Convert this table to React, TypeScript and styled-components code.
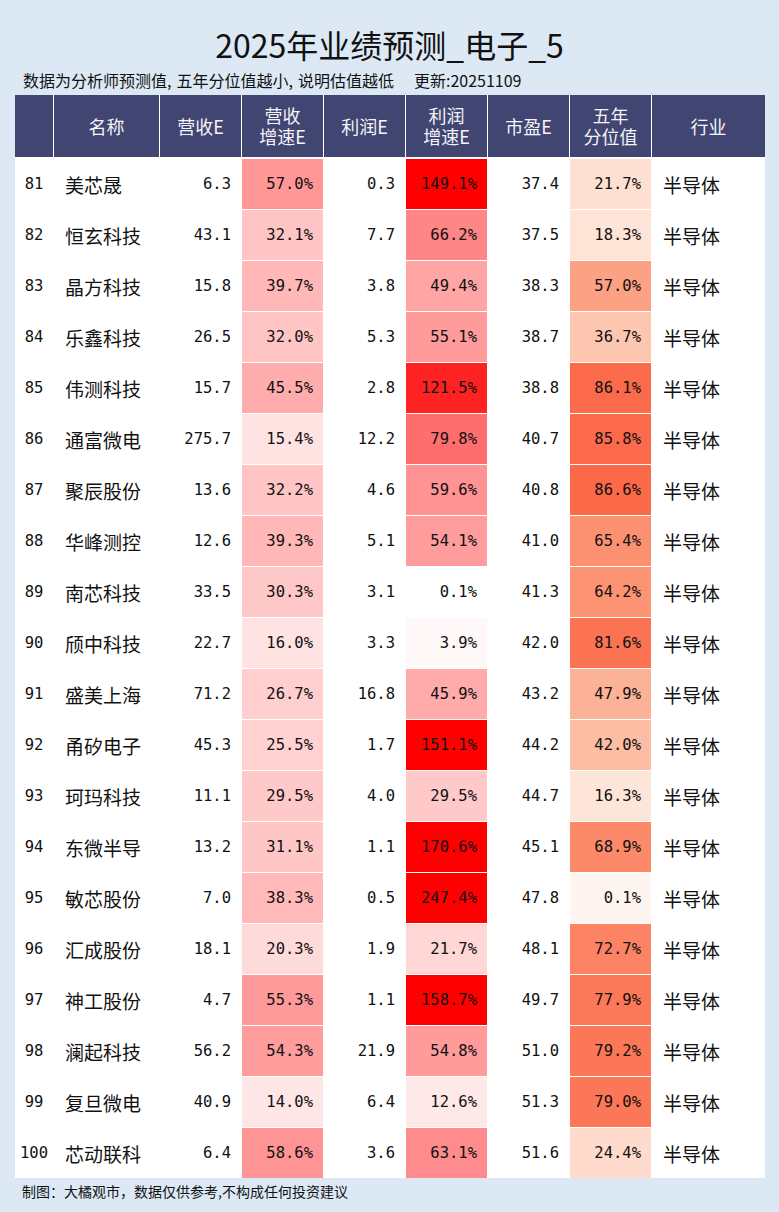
import React from "react";
import styled, { createGlobalStyle } from "styled-components";

const GlobalStyle = createGlobalStyle`
  html, body { margin: 0; padding: 0; background: #dce9f5; }
  * { box-sizing: border-box; }
`;

const CJK = `"Noto Sans CJK SC", "Noto Sans", sans-serif`;
const MONO = `"DejaVu Sans Mono", "Liberation Mono", monospace`;

type Row = [number, string, number, number, number, number, number, number];

const rows: Row[] = [
  [81, "美芯晟", 6.3, 57.0, 0.3, 149.1, 37.4, 21.7],
  [82, "恒玄科技", 43.1, 32.1, 7.7, 66.2, 37.5, 18.3],
  [83, "晶方科技", 15.8, 39.7, 3.8, 49.4, 38.3, 57.0],
  [84, "乐鑫科技", 26.5, 32.0, 5.3, 55.1, 38.7, 36.7],
  [85, "伟测科技", 15.7, 45.5, 2.8, 121.5, 38.8, 86.1],
  [86, "通富微电", 275.7, 15.4, 12.2, 79.8, 40.7, 85.8],
  [87, "聚辰股份", 13.6, 32.2, 4.6, 59.6, 40.8, 86.6],
  [88, "华峰测控", 12.6, 39.3, 5.1, 54.1, 41.0, 65.4],
  [89, "南芯科技", 33.5, 30.3, 3.1, 0.1, 41.3, 64.2],
  [90, "颀中科技", 22.7, 16.0, 3.3, 3.9, 42.0, 81.6],
  [91, "盛美上海", 71.2, 26.7, 16.8, 45.9, 43.2, 47.9],
  [92, "甬矽电子", 45.3, 25.5, 1.7, 151.1, 44.2, 42.0],
  [93, "珂玛科技", 11.1, 29.5, 4.0, 29.5, 44.7, 16.3],
  [94, "东微半导", 13.2, 31.1, 1.1, 170.6, 45.1, 68.9],
  [95, "敏芯股份", 7.0, 38.3, 0.5, 247.4, 47.8, 0.1],
  [96, "汇成股份", 18.1, 20.3, 1.9, 21.7, 48.1, 72.7],
  [97, "神工股份", 4.7, 55.3, 1.1, 158.7, 49.7, 77.9],
  [98, "澜起科技", 56.2, 54.3, 21.9, 54.8, 51.0, 79.2],
  [99, "复旦微电", 40.9, 14.0, 6.4, 12.6, 51.3, 79.0],
  [100, "芯动联科", 6.4, 58.6, 3.6, 63.1, 51.6, 24.4],
];

const headers = ["", "名称", "营收E", "营收\n增速E", "利润E", "利润\n增速E", "市盈E", "五年\n分位值", "行业"];

function growthColor(v: number): string {
  const t = Math.max(0, Math.min(1, v / 140));
  const g = Math.round(255 * (1 - t));
  return `rgb(255,${g},${g})`;
}

const REDS: [number, number, number, number][] = [
  [0, 255, 245, 240],
  [0.125, 254, 224, 210],
  [0.25, 252, 187, 161],
  [0.375, 252, 146, 114],
  [0.5, 251, 106, 74],
  [0.625, 239, 59, 44],
];

function pctColor(v: number): string {
  const t = Math.min(0.62, (v / 100) * 0.58);
  for (let i = 0; i < REDS.length - 1; i++) {
    const a = REDS[i];
    const b = REDS[i + 1];
    if (t >= a[0] && t <= b[0]) {
      const k = (t - a[0]) / (b[0] - a[0]);
      const c = [1, 2, 3].map((j) => Math.round(a[j] + (b[j] - a[j]) * k));
      return `rgb(${c[0]},${c[1]},${c[2]})`;
    }
  }
  return "rgb(255,245,240)";
}

const Page = styled.div`
  width: 779px;
  height: 1212px;
  overflow: hidden;
  background: #dce9f5;
  display: flex;
  flex-direction: column;
`;

const Title = styled.h1`
  margin: 0;
  padding-top: 24px;
  font-family: ${CJK};
  font-size: 32px;
  font-weight: 400;
  line-height: 40px;
  text-align: center;
  color: #111;
`;

const Subtitle = styled.div`
  margin-top: 6px;
  padding-left: 23px;
  font-family: ${CJK};
  font-size: 16px;
  line-height: 20px;
  color: #111;
  white-space: nowrap;
`;

const Sep = styled.span`
  margin-right: 5px;
`;

const Updated = styled.span`
  margin-left: 20px;
`;

const Table = styled.div`
  margin: 5px 0 0 15px;
  width: 750px;
  display: grid;
  grid-template-columns: 38px 105px 81px 81px 81px 81px 81px 81px 113px;
  grid-template-rows: 63px repeat(20, 50px);
  column-gap: 1px;
  row-gap: 1px;
  background: #ffffff;
`;

const HeaderCell = styled.div`
  align-self: start;
  height: 62px;
  background: #414571;
  color: #f4f4f8;
  font-family: ${CJK};
  font-size: 18px;
  line-height: 21px;
  display: flex;
  align-items: center;
  justify-content: center;
  text-align: center;
  white-space: pre-line;
`;

const Cell = styled.div<{ $align: "left" | "right" | "center"; $bg?: string; $cjk?: boolean }>`
  background: ${(p) => p.$bg || "#ffffff"};
  color: #111;
  display: flex;
  align-items: center;
  justify-content: ${(p) => (p.$align === "left" ? "flex-start" : p.$align === "right" ? "flex-end" : "center")};
  padding: ${(p) => (p.$align === "left" ? "0 0 0 11px" : p.$align === "right" ? "0 10px 0 0" : "0")};
  font-family: ${(p) => (p.$cjk ? CJK : MONO)};
  font-size: ${(p) => (p.$cjk ? "19px" : "15.5px")};
  white-space: nowrap;
`;

const Footer = styled.div`
  margin-top: 3px;
  padding-left: 22px;
  font-family: ${CJK};
  font-size: 14px;
  line-height: 20px;
  color: #111;
`;

export default function App() {
  return (
    <>
      <GlobalStyle />
      <Page>
        <Title>2025年业绩预测_电子_5</Title>
        <Subtitle>
          数据为分析师预测值<Sep>,</Sep>五年分位值越小<Sep>,</Sep>说明估值越低
          <Updated>更新:20251109</Updated>
        </Subtitle>
        <Table>
          {headers.map((h, i) => (
            <HeaderCell key={`h${i}`}>{h}</HeaderCell>
          ))}
          {rows.map((r) => (
            <React.Fragment key={r[0]}>
              <Cell $align="center">{r[0]}</Cell>
              <Cell $align="left" $cjk>{r[1]}</Cell>
              <Cell $align="right">{r[2].toFixed(1)}</Cell>
              <Cell $align="right" $bg={growthColor(r[3])}>{r[3].toFixed(1)}%</Cell>
              <Cell $align="right">{r[4].toFixed(1)}</Cell>
              <Cell $align="right" $bg={growthColor(r[5])}>{r[5].toFixed(1)}%</Cell>
              <Cell $align="right">{r[6].toFixed(1)}</Cell>
              <Cell $align="right" $bg={pctColor(r[7])}>{r[7].toFixed(1)}%</Cell>
              <Cell $align="left" $cjk>半导体</Cell>
            </React.Fragment>
          ))}
        </Table>
        <Footer>制图：大橘观市，数据仅供参考,不构成任何投资建议</Footer>
      </Page>
    </>
  );
}
